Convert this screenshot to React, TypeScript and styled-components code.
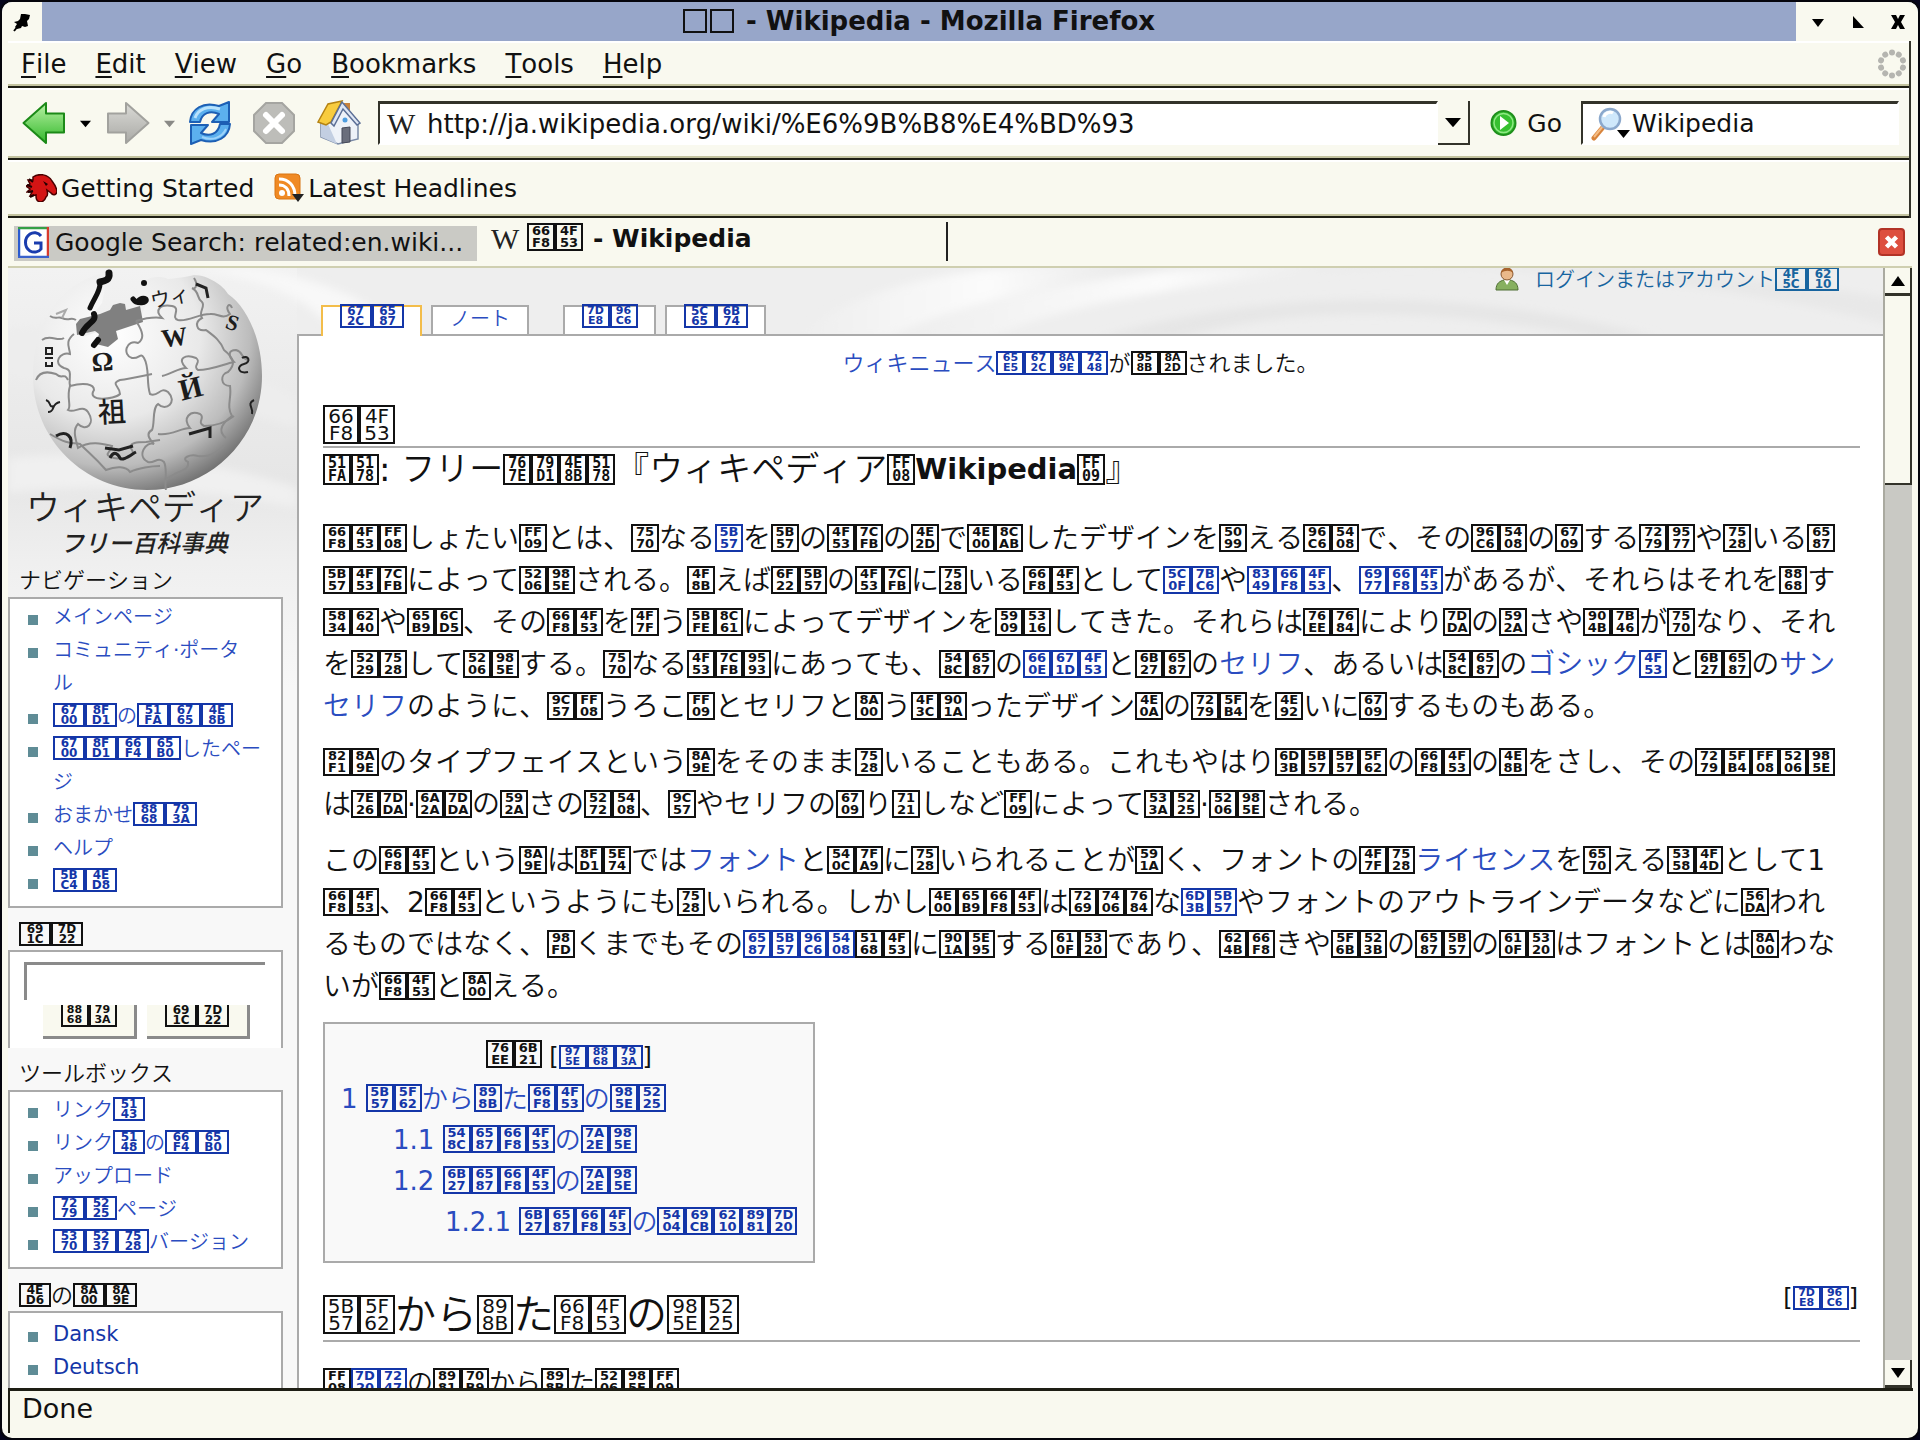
import React from "react";
import styled, { createGlobalStyle } from "styled-components";

const cream = "#f9f9ef";
const blue = "#1436a8";
const kanaBlue = "#2a4cc0";
const rule = "#aaaaaa";
const kanaFaces = `"Noto Sans CJK JP DemiLight", "Noto Sans CJK JP Light", "Noto Sans CJK JP", sans-serif`;

const Global = createGlobalStyle`
  * { box-sizing: border-box; }
  html, body { margin: 0; background: #05051c; }
  body { font-family: "DejaVu Sans", ${kanaFaces}; font-kerning: none; color: #111; }
  button { font: inherit; color: inherit; background: none; border: 0; padding: 0; margin: 0; }
  a { text-decoration: none; color: inherit; }
  ul, ol { list-style: none; margin: 0; padding: 0; }
  h1, h2, h3, p { margin: 0; font-weight: 400; }
  svg { display: block; flex: none; }
`;

/* ---------- missing-glyph boxes ---------- */

type Kind = "body" | "narrow" | "small" | "sub" | "large";

interface BoxSize {
  w: number;
  h: number;
  f: number;
  row: number;
  top: number;
  side: number;
  drop: number;
  face: string;
  weight: number;
}

const mono = "DejaVu Sans Mono";
const sans = "DejaVu Sans";

const sizes: Record<Kind, BoxSize> = {
  body: { w: 28, h: 28, f: 13, row: 12, top: 0, side: 0, drop: -4, face: sans, weight: 700 },
  narrow: { w: 28, h: 24, f: 11, row: 10, top: 0, side: 1, drop: -4, face: sans, weight: 700 },
  small: { w: 32, h: 24, f: 12, row: 10, top: 0, side: 3, drop: -4, face: sans, weight: 700 },
  sub: { w: 28, h: 31, f: 15, row: 13, top: 1, side: 0, drop: -5, face: mono, weight: 700 },
  large: { w: 36, h: 39, f: 20, row: 17, top: 1, side: 0, drop: -5, face: sans, weight: 400 },
};

/* Wide enough for two digits, so the four-digit code folds into two rows. */
const Box = styled.span<{ $k: Kind }>`
  display: inline-block;
  flex: none;
  overflow: hidden;
  width: ${(p) => sizes[p.$k].w}px;
  height: ${(p) => sizes[p.$k].h}px;
  padding: ${(p) => sizes[p.$k].top}px ${(p) => sizes[p.$k].side}px 0;
  vertical-align: ${(p) => sizes[p.$k].drop}px;
  border: 2px solid currentColor;
  font-family: "${(p) => sizes[p.$k].face}", monospace;
  font-size: ${(p) => sizes[p.$k].f}px;
  font-weight: ${(p) => sizes[p.$k].weight};
  line-height: ${(p) => sizes[p.$k].row}px;
  text-align: center;
  word-break: break-all;
  line-break: anywhere;
  white-space: normal;
`;

const Tofu = ({ ch, kind }: { ch: string; kind: Kind }) => (
  <Box $k={kind}>{ch.charCodeAt(0).toString(16).toUpperCase().padStart(4, "0")}</Box>
);

const J = ({ t, kind = "body" }: { t: string; kind?: Kind }) => (
  <>
    {t.split(/([\u4E00-\u9FFF\uFF08\uFF09])/).map((s, i) =>
      i % 2 ? <Tofu key={i} ch={s} kind={kind} /> : s ? <React.Fragment key={i}>{s}</React.Fragment> : null
    )}
  </>
);

const A = styled.a`
  color: ${kanaBlue};
  ${Box} { color: ${blue}; }
`;

const L = ({ t, kind }: { t: string; kind?: Kind }) => (
  <A href="#">
    <J t={t} kind={kind} />
  </A>
);

/* ---------- window chrome ---------- */

const Window = styled.div`
  display: flex;
  flex-direction: column;
  height: 100vh;
  background: ${cream};
  border: 2px solid #05050c;
  border-radius: 12px;
  overflow: hidden;
`;

const TitleBar = styled.header`
  display: flex;
  height: 39px;
  flex: none;
  background: #97a6c9;
`;

const PinButton = styled.button`
  display: flex;
  width: 40px;
  align-items: center;
  justify-content: center;
  background: ${cream};
`;

const Title = styled.h1`
  && { font-weight: 700; }
  flex: 1;
  display: flex;
  align-items: center;
  justify-content: center;
  gap: 3px;
  font-size: 26px;
  line-height: 36px;
  padding-bottom: 2px;
  white-space: pre;
`;

const Blank = styled.span`
  width: 24px;
  height: 24px;
  border: 2px solid #111;
`;

const WinControls = styled.div`
  display: flex;
  width: 122px;
  align-items: center;
  justify-content: space-between;
  padding: 0 12px 0 14px;
  background: ${cream};
`;

const Bars = styled.div`
  flex: none;
  margin: 0 7px 0 6px;
  border-right: 2px solid #33332a;
`;

const Bar = styled.div<{ $h: number }>`
  display: flex;
  align-items: center;
  height: ${(p) => p.$h}px;
  border-bottom: 2px solid #1e1e14;
  box-shadow: inset 0 -2px #c3c39f, inset 0 2px #ffffff;
`;

const MenuBar = styled(Bar)`
  gap: 29px;
  padding: 0 2px 0 13px;
  font-size: 26px;
  button::first-letter { text-decoration: underline; text-decoration-thickness: 2px; text-underline-offset: 3px; }
`;

const Push = styled.span`
  margin-left: auto;
`;

const NavBar = styled(Bar)`
  padding: 0 10px 0 14px;
  font-size: 25px;
`;

const NavTool = styled.button<{ $w: number }>`
  display: flex;
  width: ${(p) => p.$w}px;
  align-items: center;
  justify-content: flex-start;
`;

const Field = styled.label<{ $grow?: boolean; $w?: number }>`
  display: flex;
  align-items: center;
  height: 44px;
  ${(p) => (p.$grow ? "flex: 1;" : `width: ${p.$w}px;`)}
  background: #fff;
  border: 2px solid #fff;
  border-top: 3px solid #33332a;
  border-left: 2px solid #33332a;
  padding-left: 7px;
`;

const TextInput = styled.input`
  flex: 1;
  min-width: 0;
  border: 0;
  outline: 0;
  padding: 0;
  background: none;
  font: inherit;
  font-kerning: none;
  color: #111;
`;

const AddressInput = styled(TextInput)`
  margin-left: 10px;
  font-size: 26px;
`;

const DropButton = styled.button`
  display: flex;
  width: 32px;
  height: 44px;
  align-items: center;
  justify-content: center;
  background: ${cream};
  border-right: 2px solid #33332a;
  border-bottom: 2px solid #33332a;
`;

const GoButton = styled.button`
  display: flex;
  align-items: center;
  gap: 10px;
  margin: 0 19px 0 20px;
`;

const Bookmarks = styled(Bar)`
  padding: 0 18px;
  gap: 20px;
  font-size: 25px;
`;

const Bookmark = styled.a`
  display: flex;
  align-items: center;
  gap: 4px;
`;

const TabRow = styled.nav`
  display: flex;
  flex: none;
  align-items: stretch;
  height: 50px;
  margin: 0 6px 0 6px;
  padding: 4px 7px 5px 6px;
  font-size: 25px;
  border-bottom: 2px solid #cfcfb0;
`;

const TabOld = styled.a`
  display: flex;
  align-items: center;
  gap: 6px;
  width: 463px;
  margin-top: 4px;
  padding: 0 4px 2px;
  background: #cacac5;
  white-space: nowrap;
`;

const TabNow = styled.a`
  display: flex;
  align-items: center;
  width: 471px;
  padding: 0 0 6px 14px;
  font-weight: 700;
  white-space: pre;
  border-right: 2px solid #222;
`;

const TabGlyphs = styled.span`
  display: flex;
  margin: 0 10px 4px 6px;
`;

const TabClose = styled.button`
  display: flex;
  align-items: center;
  margin-left: auto;
`;

const SerifW = styled.span`
  font-family: "Liberation Serif", serif;
  font-weight: 400;
  font-size: 30px;
  line-height: 32px;
  width: 30px;
  color: #222;
`;

/* ---------- page ---------- */

const Viewport = styled.div`
  display: flex;
  flex: 1;
  min-height: 0;
  margin: 0 6px 0 6px;
`;

const Page = styled.div`
  position: relative;
  display: flex;
  flex: 1;
  min-width: 0;
  overflow: hidden;
  background: #f8f8f8;
`;

const Backdrop = styled.svg`
  position: absolute;
  left: 0;
  top: 0;
`;

const Sidebar = styled.aside`
  position: relative;
  width: 289px;
  flex: none;
  padding-right: 14px;
  font-size: 20px;
`;

const Logo = styled.a`
  display: block;
  height: 301px;
  color: #222;
`;

const LogoName = styled.span`
  display: block;
  padding-left: 18px;
  font-size: 34px;
  line-height: 36px;
`;

const LogoTag = styled.span`
  display: block;
  padding-left: 52px;
  font-size: 24px;
  line-height: 32px;
  font-style: italic;
  font-weight: 500;
  font-family: "Noto Sans CJK JP", sans-serif;
`;

const PortletHead = styled.h3`
  height: 28px;
  padding-left: 11px;
  font-size: 22px;
  line-height: 24px;
  & + * { margin-bottom: 14px; }
`;

const Panel = styled.div<{ $open?: boolean }>`
  background: #fff;
  border: 2px solid ${rule};
  ${(p) => p.$open && "border-bottom: 0;"}
`;

const LinkList = styled.ul`
  padding: 2px 16px 8px 43px;
`;

const LatinList = styled(LinkList)`
  padding-top: 5px;
`;

const LinkItem = styled.li`
  position: relative;
  line-height: 33px;
  line-break: anywhere;
  white-space: pre-line;
  &::before {
    content: "";
    position: absolute;
    left: -25px;
    top: 14px;
    width: 10px;
    height: 10px;
    background: #5f8c96;
  }
`;

const LatinItem = styled(LinkItem)`
  font-size: 21px;
  a { color: ${blue}; }
`;

const SearchForm = styled.form`
  padding: 10px 16px 9px 14px;
`;

const SearchBox = styled.input`
  display: block;
  width: 100%;
  height: 38px;
  border: 0;
  border-top: 3px solid #8a8a8a;
  border-left: 3px solid #8a8a8a;
  outline: 0;
  background: #fff;
`;

const SearchButtons = styled.div`
  display: flex;
  gap: 10px;
  margin: 5px 0 0 19px;
`;

const SearchButton = styled.button<{ $w: number }>`
  && {
    display: flex;
    justify-content: center;
    width: ${(p) => p.$w}px;
    height: 34px;
    padding-bottom: 9px;
    align-items: flex-end;
    overflow: hidden;
    background: ${cream};
    border-right: 3px solid #8a8a8a;
    border-bottom: 3px solid #8a8a8a;
  }
`;

const Main = styled.div`
  position: relative;
  display: flex;
  flex-direction: column;
  flex: 1;
  min-width: 0;
`;

const Personal = styled.div`
  display: flex;
  flex: none;
  align-items: center;
  justify-content: flex-end;
  gap: 16px;
  height: 22px;
  padding-right: 44px;
  font-size: 20px;
  line-height: 22px;
  a, a ${Box} { color: #17649f; }
`;

const Views = styled.div`
  display: flex;
  flex: none;
  align-items: flex-end;
  height: 44px;
  padding-left: 24px;
  gap: 9px;
`;

const View = styled.a<{ $on?: boolean; $w: number; $gap?: boolean }>`
  position: relative;
  display: flex;
  justify-content: center;
  width: ${(p) => p.$w}px;
  height: ${(p) => (p.$on ? 31 : 29)}px;
  margin-bottom: ${(p) => (p.$on ? -2 : 0)}px;
  margin-left: ${(p) => (p.$gap ? 25 : 0)}px;
  z-index: 1;
  background: #fff;
  border: 2px solid ${(p) => (p.$on ? "#f3bd4a" : rule)};
  border-bottom: 0;
  font-size: 20px;
  line-height: 24px;
  color: ${kanaBlue};
  ${Box} { color: ${blue}; margin-top: -3px; }
`;

const Content = styled.main`
  flex: 1 0 auto;
  background: #fff;
  border-top: 2px solid ${rule};
  border-left: 2px solid ${rule};
  padding: 15px 23px 0 24px;
  font-size: 28px;
`;

const News = styled.div`
  padding-right: 22px;
  text-align: center;
  font-size: 22px;
  line-height: 26px;
`;

const Heading = styled.h2`
  height: 54px;
  margin-top: 17px;
  font-size: 41px;
  line-height: 62px;
  border-bottom: 2px solid ${rule};
`;

const SubTitle = styled.h3`
  display: flex;
  align-items: center;
  height: 42px;
  font-size: 34px;
  line-height: 42px;
  white-space: pre;
`;

const Bold = styled.span`
  font-size: 29px;
  font-weight: 700;
`;

const Body = styled.div`
  padding: 28px 10px 0 0;
`;

const P = styled.p`
  line-height: 42px;
  margin-bottom: 14px;
  line-break: anywhere;
`;

const Toc = styled.nav`
  width: 492px;
  margin-top: 4px;
  padding: 11px 16px 18px;
  background: #f9f9f9;
  border: 2px solid ${rule};
  font-size: 26px;
`;

const TocTitle = styled.div`
  display: flex;
  justify-content: center;
  gap: 7px;
  height: 44px;
  line-height: 40px;
`;

const Bracket = styled.span`
  font-size: 24px;
  line-height: 44px;
`;

const TocItem = styled.li<{ $lv: number }>`
  padding-left: ${(p) => p.$lv * 52}px;
  line-height: 41px;
  white-space: nowrap;
`;

const Section = styled.section`
  margin-top: 23px;
`;

const SectionHead = styled.div`
  display: flex;
  justify-content: space-between;
  align-items: flex-start;
  height: 56px;
  border-bottom: 2px solid ${rule};
`;

const SectionTitle = styled.h2`
  font-size: 41px;
  line-height: 58px;
`;

const Edit = styled(Bracket)`
  padding-right: 2px;
  line-height: 4px;
`;

const Cut = styled.h3`
  margin-top: 20px;
  font-size: 26px;
  line-height: 42px;
  white-space: nowrap;
`;

const ScrollBar = styled.div`
  display: flex;
  flex-direction: column;
  width: 29px;
  background: #c9c9c4;
  border-left: 2px solid #aaaaa0;
`;

const ScrollButton = styled.button`
  && {
    display: flex;
    height: 28px;
    flex: none;
    align-items: center;
    justify-content: center;
    background: ${cream};
    border-right: 2px solid #33332a;
    border-bottom: 3px solid #33332a;
  }
`;

const Thumb = styled.div`
  height: 189px;
  background: ${cream};
  border-right: 2px solid #33332a;
  border-bottom: 2px solid #33332a;
`;

const Track = styled.div`
  flex: 1;
`;

const Status = styled.footer`
  flex: none;
  height: 45px;
  margin: 0 5px 5px 6px;
  padding: 0 12px;
  font-size: 27px;
  line-height: 36px;
  border-top: 3px solid #1e1e14;
  border-left: 2px solid #1e1e14;
`;

/* ---------- icons ---------- */

const Caret = ({ s = 11, c = "#000" }: { s?: number; c?: string }) => (
  <svg width={s} height={s} viewBox="0 0 12 12"><path d="M0 3h12L6 10z" fill={c} /></svg>
);

const Pin = () => (
  <svg width="18" height="20" viewBox="0 0 18 20"><path d="M8 2l4 0 5 1-1 4-2 2 1 5-3 1-3-1-1 2-4 1-2-2 2-3-3-2 4-1 2-2z" fill="#000" /><path d="M5 14l-4 5" stroke="#000" strokeWidth="2" /></svg>
);

const WinIcon = ({ d }: { d: string }) => (
  <svg width="16" height="18" viewBox="0 0 16 18"><path d={d} fill="#000" /></svg>
);

const Throbber = () => (
  <svg width="30" height="30" viewBox="0 0 30 30">
    {[0, 36, 72, 108, 144, 180, 216, 252, 288, 324].map((a) => (
      <circle key={a} cx="15" cy="3.5" r="3" fill="#b5b5b0" transform={`rotate(${a} 15 15)`} />
    ))}
  </svg>
);

const Arrow = ({ fwd }: { fwd?: boolean }) => (
  <svg width="44" height="44" viewBox="0 0 44 44">
    <defs>
      <linearGradient id={fwd ? "ag" : "ab"} x1="0" y1="0" x2="0" y2="1">
        <stop offset="0" stopColor={fwd ? "#dadad6" : "#b8f2a4"} />
        <stop offset="1" stopColor={fwd ? "#aaaaa6" : "#34b82c"} />
      </linearGradient>
    </defs>
    <path
      d="M1.500 22L24 2v10.500h18v19H24V42z"
      transform={fwd ? "matrix(-1 0 0 1 44 0)" : undefined}
      fill={`url(#${fwd ? "ag" : "ab"})`}
      stroke={fwd ? "#a2a29e" : "#1c8a18"}
      strokeWidth="2"
      strokeLinejoin="round"
    />
  </svg>
);

const Reload = () => (
  <svg width="44" height="44" viewBox="0 0 44 44">
    <g fill="#5cb0ee" stroke="#1d5fb4" strokeWidth="2" strokeLinejoin="round">
      <path d="M2 21C3 8 15 0 31 5l10-4v20H24l7-8C22 9 14 12 12 21z" />
      <path d="M42 23C41 36 29 44 13 39L3 43V24h17l-7 8c9 4 17 1 19-9z" />
    </g>
    <path d="M7 17C10 8 20 4 32 8" fill="none" stroke="#b8e2fc" strokeWidth="3" />
    <path d="M14 36c10 4 20 1 24-8" fill="none" stroke="#9dd3fa" strokeWidth="2" />
  </svg>
);

const Stop = () => (
  <svg width="44" height="44" viewBox="0 0 44 44">
    <path d="M14 2h16l12 12v16L30 42H14L2 30V14z" fill="#bdbdb9" stroke="#a5a5a1" strokeWidth="2" />
    <path d="M14 14l16 16M30 14L14 30" stroke="#fff" strokeWidth="6" strokeLinecap="round" />
  </svg>
);

const Home = () => (
  <svg width="46" height="46" viewBox="0 0 46 46">
    <path d="M12 23l14-17 16 18v15L22 44 5 37V22z" fill="#eef2f8" stroke="#7a8aa6" strokeWidth="1.500" />
    <path d="M5 22l7 2 9 20L5 37z" fill="#c3cfe2" />
    <path d="M26 28l8-1v15l-8 1z" fill="#6a6e7c" stroke="#454958" />
    <path d="M28 3h6v8l-6-4z" fill="#c7823c" />
    <path d="M2 22L12 4l14-3-11 21-5 3z" fill="#f8cc3e" stroke="#b58312" strokeWidth="1.500" />
    <path d="M15 23L26 2l18 21-3 2L27 9 18 26z" fill="#dfe7f4" stroke="#5c6f96" strokeWidth="1.500" />
    <circle cx="29" cy="20" r="2.500" fill="#4f9ee0" />
  </svg>
);

const GoIcon = () => (
  <svg width="27" height="28" viewBox="0 0 27 28">
    <circle cx="13.500" cy="14" r="12" fill="#36c030" stroke="#1f8f1c" strokeWidth="2" />
    <circle cx="13.500" cy="14" r="9.500" fill="none" stroke="#8fe884" strokeWidth="1.500" />
    <path d="M10 7l9 7-9 7z" fill="#fff" />
  </svg>
);

const Magnifier = () => (
  <svg width="42" height="34" viewBox="0 0 42 34">
    <path d="M4 31L14 19" stroke="#d8843c" strokeWidth="5" strokeLinecap="round" />
    <path d="M4 30L13 19" stroke="#f6bd84" strokeWidth="2" />
    <circle cx="20" cy="12" r="10" fill="#cfe8fb" stroke="#8ba8cc" strokeWidth="2.500" />
    <path d="M14 10c1-4 6-6 9-4" stroke="#fff" strokeWidth="3" fill="none" />
    <path d="M27 23h13l-6.500 8z" fill="#000" />
  </svg>
);

const Dino = () => (
  <svg width="31" height="28" viewBox="0 0 31 28">
    <path d="M7 3C13-1 22 0 26 7c3 4 5 7 5 11-1 3-4 4-6 1l-4-3c1 4 1 6-1 7-1 3-3 5-6 5-4-1-4-4-4-7l-6 1 2-4-5 0 3-3-4-3 4-2-2-4 5 0z" fill="#d41414" stroke="#4a0000" strokeWidth="1.500" />
    <path d="M3 5l4 3M1 11l5 2M2 18l5-1M4 23l4-2" stroke="#200000" strokeWidth="2" />
    <path d="M17 7l5 3-2 2z" fill="#200000" />
  </svg>
);

const Rss = () => (
  <svg width="30" height="30" viewBox="0 0 30 30">
    <rect x="1" y="1" width="25" height="25" rx="4" fill="#f08a24" stroke="#d87412" />
    <circle cx="8" cy="20" r="3" fill="#fff" />
    <path d="M5 12c6 0 10 4 10 11M5 6c10 0 16 7 16 17" fill="none" stroke="#fff" strokeWidth="3" />
    <path d="M18 21h12l-6 8z" fill="#222" />
  </svg>
);

const GIcon = () => (
  <svg width="31" height="31" viewBox="0 0 31 31">
    <rect x="1" y="1" width="29" height="29" fill="#fff" />
    <path d="M1 30V1" stroke="#2a5bd0" strokeWidth="2.500" />
    <path d="M0 1h31" stroke="#35a045" strokeWidth="2.500" />
    <path d="M30 0v31" stroke="#d83a2c" strokeWidth="2.500" />
    <path d="M0 30h31" stroke="#3a62cc" strokeWidth="2.500" />
    <path d="M23 9C20 5 15 5 12 7c-6 4-6 13 0 17 4 2 9 1 11-2v-6h-7" fill="none" stroke="#1a3cae" strokeWidth="3" />
  </svg>
);

const CloseIcon = () => (
  <svg width="27" height="28" viewBox="0 0 27 28">
    <rect x="1" y="1" width="25" height="26" rx="3" fill="#dd4f3f" stroke="#b23326" strokeWidth="2" />
    <path d="M8.500 9l10 10M18.500 9l-10 10" stroke="#fff" strokeWidth="4.500" />
  </svg>
);

const Person = () => (
  <svg width="24" height="24" viewBox="0 0 24 24">
    <path d="M1 23c0-7 4-9 8-10h6c4 1 8 3 8 10z" fill="#87b060" stroke="#4f6f34" />
    <path d="M9 13l3 5 3-5z" fill="#fff" />
    <circle cx="12" cy="7" r="6" fill="#eab98a" stroke="#8a5a34" />
    <path d="M6 6c0-7 12-7 12 0-3-3-8-3-12 0z" fill="#a8642c" />
  </svg>
);

const Globe = () => (
  <svg width="280" height="222" viewBox="0 0 280 222">
    <defs>
      <radialGradient id="globe" cx="0.34" cy="0.28" r="0.78">
        <stop offset="0" stopColor="#ffffff" />
        <stop offset="0.500" stopColor="#e9e9e9" />
        <stop offset="0.780" stopColor="#bcbcbc" />
        <stop offset="1" stopColor="#6c6c6c" />
      </radialGradient>
    </defs>
    <path
      d="M92 6C50 18 25 56 25 108c0 64 52 114 114 114s115-50 115-114c0-38-16-70-34-82-4-8-20-19-34-19-12 3-18 3-26 4-14-6-31 3-30 12 1 7 8 9 8 14l-6 13-58 19 4-14 16-20 4-20z"
      fill="url(#globe)"
    />
    <path d="M68 56l4-5 20-5 10-4 3-5 7-2 5 1 1 6 14-4 3 16-27 9 2 8-10 8-12-3 3-10-4-3-18 4z" fill="#808080" />
    <g fill="none" stroke="#111" strokeLinecap="round" strokeLinejoin="round">
      <path d="M101 5c1 7-4 8-9 9" strokeWidth="7" />
      <path d="M92 16c0 8-6 14-10 24" strokeWidth="5" />
      <path d="M86 46c3 8-7 8-12 19M90 72l-4 5" strokeWidth="6" />
      <path d="M125 31c4 6 15 4 13 0-3-2-6 0-7 1" strokeWidth="5" />
    </g>
    <circle cx="136" cy="15" r="3" fill="#111" />
    <g fill="none" stroke="#8b8b8b" strokeWidth="2">
      <path d="M128 53c8 12 8 18 2 22-12-4-16 12-6 15 8 1 8-6 12 0 6 10 2 24 6 36 8 4 10-8 18-2 10 10-2 20-10 12-6 4-3 20-6 26-8 4 0 12 2 14-8-3-18 12-6 18 6 2 10-6 16 0 4 8 0 22 2 28" />
      <path d="M66 66c-10 8-4 14-4 20-10-3-18 10-6 14 10 2 4 10 6 18 14-4 24-2 24 4-8 12 20 10 26 4 0-8-10-10 0-14 10-1 22-4 32-6" />
      <path d="M128 53c10-3 20-4 26-3-8-8-2-14 10-12 10 2-2 12 6 14 10 2 20-6 32-6 8-1 12 6 20 0-6-8 0-12 2-6" />
      <path d="M42 48c6 4 8 0 12 2 8 4 8-2 14 2M34 72c8-6 16 2 22-2M28 112c4-10 14-8 20-6 6 6 8-2 12 6" />
      <path d="M154 108c10-2 16-8 24-8-10-10 0-14 10-10 6 4-4 8 2 12 14 0 26-6 36-8-6-6-6-12 2-12 8 2 4 8 12 10" />
      <path d="M62 118c-4 12 2 20-2 24 6 4 14-6 20 2 8 12-2 20-10 12-6 6-2 16 0 24 12-8 26-4 34-2-2 8-10 8 2 12 12 2 22-2 18-8-6-8 8-8 14-8l14-2" />
      <path d="M150 166c14 2 22-6 32-6-8-10 0-18 10-14 6 4-4 8 4 12 10 0 20-2 30-10" />
      <path d="M186 10c4 6 2 12-2 10 8 4 4 10 10 14 4 4-4 10 0 16-8 4-6 14 4 12 8 6 14 10 18 20 10 8 12 14 4 22-8 2-8 14 2 14 2 12-4 20 2 30-8 6-16 14-6 22" />
      <path d="M42 166c20 12 22 8 30 10 10 10 14 12 26 26 10-4 20-4 24 2 8-4 22-6 30-6M158 212c10-10 24-8 22-18-8-4 2-8 10-6 12 2 20-4 26-10" />
    </g>
    <g fontFamily="Liberation Serif, serif" fill="#1c1c1c">
      <text x="84" y="103" fontSize="27" fontWeight="700" transform="rotate(-4 92 98)">Ω</text>
      <text x="154" y="78" fontSize="26" fontWeight="700" transform="rotate(-8 166 74)">W</text>
      <text x="171" y="130" fontSize="30" fontWeight="700" transform="rotate(-14 184 120)">Й</text>
      <text x="142" y="38" fontSize="20" fontFamily="Noto Sans CJK JP, sans-serif" transform="rotate(-12 154 30)">ウィ</text>
      <text x="90" y="154" fontSize="28" fontWeight="500" fontFamily="Noto Sans CJK JP, sans-serif" transform="rotate(-3 104 144)">祖</text>
      <text x="218" y="62" fontSize="22" fontWeight="700" transform="rotate(20 224 56)">S</text>
    </g>
    <g fill="none" stroke="#222" strokeWidth="3">
      <path d="M181 166l21-6v10M188 16l10 4 2 10M97 180l14 2 14-4M102 190c4-8 8-4 10 0s12-4 16-6M48 168c10-6 18 0 14 12" />
      <path d="M38 80h6v6h-6zM37 90h8M38 94v4h6v-4M38 132c6 2 2 8 8 6M40 144c8 0 2-8 12-10M234 90c6-4 10 4 2 6s-6 10 4 8M246 132c-8 4 0 8-2 14" strokeWidth="2" />
      <path d="M48 46l10-4-4 8" stroke="#aaa" strokeWidth="2" />
    </g>
  </svg>
);

const Swoosh = () => (
  <Backdrop width="1880" height="420" viewBox="0 0 1880 420" aria-hidden="true">
    <defs>
      <linearGradient id="fade" x1="0" y1="0" x2="0" y2="1">
        <stop offset="0" stopColor="#f2f2f2" />
        <stop offset="0.500" stopColor="#e6e6e6" />
        <stop offset="0.700" stopColor="#efefef" />
        <stop offset="1" stopColor="#f8f8f8" />
      </linearGradient>
      <linearGradient id="streak" x1="0" y1="0" x2="1" y2="0">
        <stop offset="0" stopColor="#eeeeee" />
        <stop offset="0.500" stopColor="#fbfbfb" />
        <stop offset="1" stopColor="#e4e4e4" />
      </linearGradient>
      <filter id="soft" x="-5%" y="-20%" width="110%" height="140%"><feGaussianBlur stdDeviation="4" /></filter>
    </defs>
    <rect width="1880" height="420" fill="url(#fade)" />
    <rect x="289" width="1591" height="70" fill="#eeeeee" />
    <g filter="url(#soft)">
      <path d="M180 0c60 8 110 20 150 66h60C370 30 300 8 240 0z" fill="#f8f8f8" />
      <path d="M0 60c120 0 220 30 289 70v30C200 130 90 110 0 110z" fill="#ededed" />
      <path d="M0 190c100-10 200 0 289 30v20C190 220 90 215 0 225z" fill="#f0f0f0" />
      <path d="M790 70C840 24 930 0 1060-4h110C1080 10 960 30 880 70z" fill="url(#streak)" />
      <path d="M890 70C960 30 1090 6 1250-4h160C1230 8 1070 30 980 70z" fill="url(#streak)" />
      <path d="M1090 70c150-46 360-56 560 0h-60c-180-34-310-30-420 0z" fill="#e6e6e6" />
      <path d="M1320-4c220 0 400 20 560 60V30C1740 8 1600-4 1480-4z" fill="#e8e8e8" />
    </g>
  </Backdrop>
);

/* ---------- data ---------- */

const menus = ["File", "Edit", "View", "Go", "Bookmarks", "Tools", "Help"];
const navLinks = ["メインページ", "コミュニティ·ポータ\nル", "最近の出来事", "最近更新したペー\nジ", "おまかせ表示", "ヘルプ", "寄付"];
const toolLinks = ["リンク元", "リンク先の更新", "アップロード", "特別ページ", "印刷用バージョン"];
const toc = [
  { lv: 0, n: "1", t: "字形から見た書体の類別" },
  { lv: 1, n: "1.1", t: "和文書体の種類" },
  { lv: 1, n: "1.2", t: "欧文書体の種類" },
  { lv: 2, n: "1.2.1", t: "欧文書体の各構成要素" },
];

const App = () => (
  <>
    <Global />
    <Window>
      <TitleBar>
        <PinButton aria-label="Pin"><Pin /></PinButton>
        <Title><Blank /><Blank />{" - Wikipedia - Mozilla Firefox"}</Title>
        <WinControls>
          <button aria-label="Minimize"><WinIcon d="M2 6h12l-6 8z" /></button>
          <button aria-label="Maximize"><WinIcon d="M3 3l11 12H3z" /></button>
          <button aria-label="Close"><WinIcon d="M1 2h5l2 4 2-4h5l-4 7 4 7h-5l-2-4-2 4H1l4-7z" /></button>
        </WinControls>
      </TitleBar>

      <Bars>
        <MenuBar $h={47}>
          {menus.map((m) => <button key={m}>{m}</button>)}
          <Push><Throbber /></Push>
        </MenuBar>
        <NavBar $h={72}>
          <NavTool $w={58} aria-label="Back"><Arrow /></NavTool>
          <NavTool $w={26} aria-label="Back history"><Caret /></NavTool>
          <NavTool $w={58} aria-label="Forward"><Arrow fwd /></NavTool>
          <NavTool $w={24} aria-label="Forward history"><Caret c="#8a8a86" /></NavTool>
          <NavTool $w={64} aria-label="Reload"><Reload /></NavTool>
          <NavTool $w={64} aria-label="Stop"><Stop /></NavTool>
          <NavTool $w={62} aria-label="Home"><Home /></NavTool>
          <Field $grow>
            <SerifW>W</SerifW>
            <AddressInput aria-label="Address" defaultValue="http://ja.wikipedia.org/wiki/%E6%9B%B8%E4%BD%93" />
          </Field>
          <DropButton aria-label="Show history"><Caret s={16} /></DropButton>
          <GoButton><GoIcon />Go</GoButton>
          <Field $w={318}>
            <Magnifier />
            <TextInput aria-label="Search" defaultValue="Wikipedia" />
          </Field>
        </NavBar>
        <Bookmarks $h={58}>
          <Bookmark href="#"><Dino />Getting Started</Bookmark>
          <Bookmark href="#"><Rss />Latest Headlines</Bookmark>
        </Bookmarks>
      </Bars>

      <TabRow>
        <TabOld href="#"><GIcon />Google Search: related:en.wiki...</TabOld>
        <TabNow href="#">
          <SerifW>W</SerifW>
          <TabGlyphs><J t="書体" /></TabGlyphs>
          - Wikipedia
        </TabNow>
        <TabClose aria-label="Close tab"><CloseIcon /></TabClose>
      </TabRow>

      <Viewport>
        <Page>
          <Swoosh />
          <Sidebar>
            <Logo href="#">
              <Globe />
              <LogoName>ウィキペディア</LogoName>
              <LogoTag>フリー百科事典</LogoTag>
            </Logo>
            <PortletHead>ナビゲーション</PortletHead>
            <Panel>
              <LinkList>
                {navLinks.map((t) => <LinkItem key={t}><L t={t} kind="small" /></LinkItem>)}
              </LinkList>
            </Panel>
            <PortletHead><J t="検索" kind="small" /></PortletHead>
            <Panel $open>
              <SearchForm>
                <SearchBox aria-label="Search this wiki" />
                <SearchButtons>
                  <SearchButton type="button" $w={94}><J t="表示" kind="narrow" /></SearchButton>
                  <SearchButton type="button" $w={103}><J t="検索" kind="small" /></SearchButton>
                </SearchButtons>
              </SearchForm>
            </Panel>
            <PortletHead>ツールボックス</PortletHead>
            <Panel>
              <LinkList>
                {toolLinks.map((t) => <LinkItem key={t}><L t={t} kind="small" /></LinkItem>)}
              </LinkList>
            </Panel>
            <PortletHead><J t="他の言語" kind="small" /></PortletHead>
            <Panel>
              <LatinList>
                <LatinItem><A href="#">Dansk</A></LatinItem>
                <LatinItem><A href="#">Deutsch</A></LatinItem>
              </LatinList>
            </Panel>
          </Sidebar>

          <Main>
            <Personal>
              <Person />
              <L t="ログインまたはアカウント作成" kind="small" />
            </Personal>
            <Views>
              <View href="#" $on $w={101}><J t="本文" kind="small" /></View>
              <View href="#" $w={98}>ノート</View>
              <View href="#" $w={93} $gap><J t="編集" kind="narrow" /></View>
              <View href="#" $w={101}><J t="履歴" kind="small" /></View>
            </Views>
            <Content>
              <News>
                <L t="ウィキニュース日本語版" kind="narrow" /><J t="が開設されました。" kind="narrow" />
              </News>
              <Heading><J t="書体" kind="large" /></Heading>
              <SubTitle>
                <J t="出典" kind="sub" />{": フリー"}<J t="百科事典" kind="sub" />『ウィキペディア
                <J t="（" kind="sub" /><Bold>Wikipedia</Bold><J t="）" kind="sub" />』
              </SubTitle>
              <Body>
                <P>
                  <J t="書体（しょたい）とは、異なる" /><L t="字" />
                  <J t="を字の体系の中で一貫したデザインを備える集合で、その集合の有する特長や用いる文字体系によって分類される。例えば漢字の体系に用いる書体として" />
                  <L t="小篆" />や<L t="草書体" />、<L t="楷書体" />
                  <J t="があるが、それらはそれを表す場所や方法、その書体を使う対象によってデザインを変化してきた。それらは目的により線の太さや運筆が異なり、それを利用して分類する。異なる体系間にあっても、和文の" />
                  <L t="明朝体" /><J t="と欧文の" /><L t="セリフ" /><J t="、あるいは和文の" /><L t="ゴシック体" /><J t="と欧文の" /><L t="サンセリフ" />
                  <J t="のように、鱗（うろこ）とセリフと言う似通ったデザイン上の特徴を互いに有するものもある。" />
                </P>
                <P>
                  <J t="英語のタイプフェイスという語をそのまま用いることもある。これもやはり活字字形の書体の事をさし、その特徴（分類は縦線·横線の太さの割合、鱗やセリフの有り無しなど）によって区別·分類される。" />
                </P>
                <P>
                  <J t="この書体という語は近年では" /><L t="フォント" /><J t="と同義に用いられることが多く、フォントの使用" /><L t="ライセンス" />
                  <J t="を数える単位として1書体、2書体というようにも用いられる。しかし一方書体は物理的な" /><L t="活字" />
                  <J t="やフォントのアウトラインデータなどに囚われるものではなく、飽くまでもその" /><L t="文字集合" />
                  <J t="全体に通底する意匠であり、手書きや彫刻の文字の意匠はフォントとは言わないが書体と言える。" />
                </P>
              </Body>
              <Toc>
                <TocTitle>
                  <span><J t="目次" /></span>
                  <Bracket>[<L t="非表示" kind="narrow" />]</Bracket>
                </TocTitle>
                <ol>
                  {toc.map((r) => (
                    <TocItem key={r.n} $lv={r.lv}><A href="#">{r.n} <J t={r.t} /></A></TocItem>
                  ))}
                </ol>
              </Toc>
              <Section>
                <SectionHead>
                  <SectionTitle><J t="字形から見た書体の類別" kind="large" /></SectionTitle>
                  <Edit>[<L t="編集" kind="narrow" />]</Edit>
                </SectionHead>
                <Cut>
                  <J t="（" /><L t="素片" /><J t="の要点から見た分類）" />
                </Cut>
              </Section>
            </Content>
          </Main>
        </Page>
        <ScrollBar>
          <ScrollButton aria-label="Scroll up"><svg width="14" height="10" viewBox="0 0 14 10"><path d="M0 10h14L7 0z" /></svg></ScrollButton>
          <Thumb />
          <Track />
          <ScrollButton aria-label="Scroll down"><svg width="14" height="10" viewBox="0 0 14 10"><path d="M0 0h14L7 10z" /></svg></ScrollButton>
        </ScrollBar>
      </Viewport>
      <Status>Done</Status>
    </Window>
  </>
);

export default App;
